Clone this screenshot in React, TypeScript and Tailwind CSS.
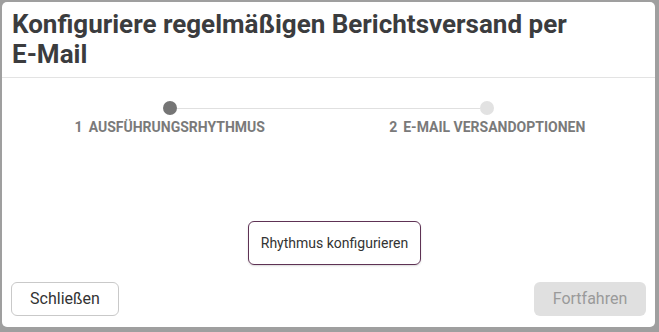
import React from "react";

const steps = [
  { n: 1, label: "Ausführungsrhythmus", active: true },
  { n: 2, label: "E-Mail Versandoptionen", active: false },
];

export default function App() {
  return (
    <div
      className="w-[659px] h-[332px] bg-[#9f9f9f] pt-[2px] pl-[2px] pr-[4px] pb-[5px]"
      style={{ fontFamily: "Roboto, 'Noto Sans', sans-serif" }}
    >
      <div className="w-full h-full bg-white rounded-[5px] flex flex-col">
        <div className="px-[10px] pt-[7px] pb-[8px] border-b border-[#e3e3e3]">
          <h1 className="text-[26px] leading-[30px] font-bold text-[#3b3c3e]">
            Konfiguriere regelmäßigen Berichtsversand per{" "}
            <span className="whitespace-nowrap">E-Mail</span>
          </h1>
        </div>

        <div className="px-[9px] pt-[23px]">
          <div className="grid grid-cols-2">
            {steps.map((s, i) => (
              <div key={s.n} className="flex items-center">
                <div
                  className={`flex-1 h-px ${i === 0 ? "bg-transparent" : "bg-[#e0e0e0]"}`}
                />
                <div
                  className={`w-[14px] h-[14px] rounded-full ${
                    s.active ? "bg-[#757575]" : "bg-[#e2e2e2]"
                  }`}
                />
                <div
                  className={`flex-1 h-px ${i === 0 ? "bg-[#e0e0e0]" : "bg-transparent"}`}
                />
              </div>
            ))}
          </div>
          <div className="grid grid-cols-2 mt-[4px]">
            {steps.map((s) => (
              <div
                key={s.n}
                className="text-center text-[14px] leading-[16px] font-bold uppercase text-[#7a7a7a]"
              >
                {s.n}
                <span className="ml-[6px]">{s.label}</span>
              </div>
            ))}
          </div>
        </div>

        <div className="flex-1 flex items-end justify-center pl-[12px] pb-[17px]">
          <button className="w-[173px] h-[44px] border border-[#5e3254] rounded-[6px] text-[14px] text-[#333] shadow-[0_1px_2px_rgba(0,0,0,0.15)]">
            Rhythmus konfigurieren
          </button>
        </div>

        <div className="flex justify-between px-[9px] pb-[11px]">
          <button className="w-[108px] h-[34px] border border-[#c9c9c9] rounded-[6px] text-[16px] text-[#333]">
            Schließen
          </button>
          <button className="w-[112px] h-[34px] bg-[#e0e0e0] rounded-[6px] text-[16px] text-[#9a9a9a]">
            Fortfahren
          </button>
        </div>
      </div>
    </div>
  );
}
